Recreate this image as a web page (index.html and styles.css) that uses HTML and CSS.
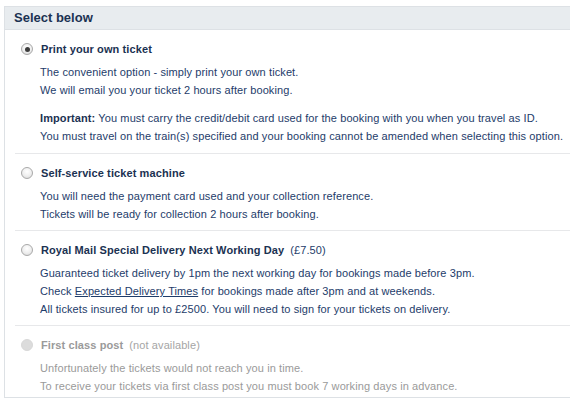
FILE: index.html
```html
<!DOCTYPE html>
<html>
<head>
<meta charset="utf-8">
<link rel="stylesheet" href="styles.css">
</head>
<body>
<div class="panel">
  <div class="head">Select below</div>
  <div class="options">
    <div class="option">
      <div class="title"><span class="radio checked"></span><span class="name">Print your own ticket</span></div>
      <p>The convenient option - simply print your own ticket.<br>We will email you your ticket 2 hours after booking.</p>
      <p><b>Important:</b> You must carry the credit/debit card used for the booking with you when you travel as ID.<br>You must travel on the train(s) specified and your booking cannot be amended when selecting this option.</p>
    </div>
    <div class="option">
      <div class="title"><span class="radio"></span><span class="name">Self-service ticket machine</span></div>
      <p>You will need the payment card used and your collection reference.<br>Tickets will be ready for collection 2 hours after booking.</p>
    </div>
    <div class="option">
      <div class="title"><span class="radio"></span><span class="name">Royal Mail Special Delivery Next Working Day</span><span class="extra">(£7.50)</span></div>
      <p>Guaranteed ticket delivery by 1pm the next working day for bookings made before 3pm.<br>Check <a href="#">Expected Delivery Times</a> for bookings made after 3pm and at weekends.<br>All tickets insured for up to £2500. You will need to sign for your tickets on delivery.</p>
    </div>
    <div class="option disabled">
      <div class="title"><span class="radio off"></span><span class="name">First class post</span><span class="extra">(not available)</span></div>
      <p>Unfortunately the tickets would not reach you in time.<br>To receive your tickets via first class post you must book 7 working days in advance.</p>
    </div>
  </div>
</div>
</body>
</html>
```
FILE: styles.css
```css
html, body {
  margin: 0;
  padding: 0;
  background: #fff;
  overflow: hidden;
}
body {
  font-family: "Liberation Sans", Arial, sans-serif;
  font-size: 11px;
  letter-spacing: 0.1px;
  color: #1e3c6a;
}
.panel {
  margin: 6px 0 0 4px;
  width: 566px;
  border: 1px solid #dde1e5;
  border-right: none;
  height: 392px;
  box-sizing: border-box;
  overflow: hidden;
}
.head {
  background: #e8ecef;
  border-bottom: 1px solid #dde1e5;
  height: 22px;
  line-height: 22px;
  padding-left: 9px;
  font-weight: bold;
  font-size: 13px;
  letter-spacing: 0;
  color: #1b3252;
}
.options {
  padding-left: 10px;
}
.option {
  border-bottom: 1px solid #e7e8ea;
  padding: 10px 0 7px 0;
}
.option:first-child {
  padding-bottom: 8px;
}
.option:last-child {
  border-bottom: none;
}
.title {
  display: flex;
  align-items: center;
  height: 18px;
  margin-bottom: 5px;
}
.radio {
  width: 12px;
  height: 12px;
  border-radius: 50%;
  box-sizing: border-box;
  border: 1px solid #a9a9a9;
  background: radial-gradient(circle at 50% 35%, #ffffff 0%, #eeeeee 55%, #d4d4d4 100%);
  margin-left: 6px;
  margin-right: 8px;
  position: relative;
}
.radio.checked::after {
  content: "";
  position: absolute;
  left: 2.5px;
  top: 2.5px;
  width: 5px;
  height: 5px;
  border-radius: 50%;
  background: #3c3c3c;
}
.radio.off {
  border-color: #d8d8d8;
  background: #dcdcdc;
}
.name {
  font-weight: bold;
  color: #1b3252;
}
.extra {
  margin-left: 6px;
  color: #1e3c6a;
}
p {
  margin: 0 0 10px 25px;
  line-height: 18px;
}
p:last-child {
  margin-bottom: 0;
}
p b {
  color: #1b3252;
}
a {
  color: #1e3c6a;
  text-decoration: underline;
}
.disabled, .disabled .name, .disabled .extra, .disabled p {
  color: #9a9a9a;
}
.disabled .extra {
  color: #a5a5a5;
}
```
